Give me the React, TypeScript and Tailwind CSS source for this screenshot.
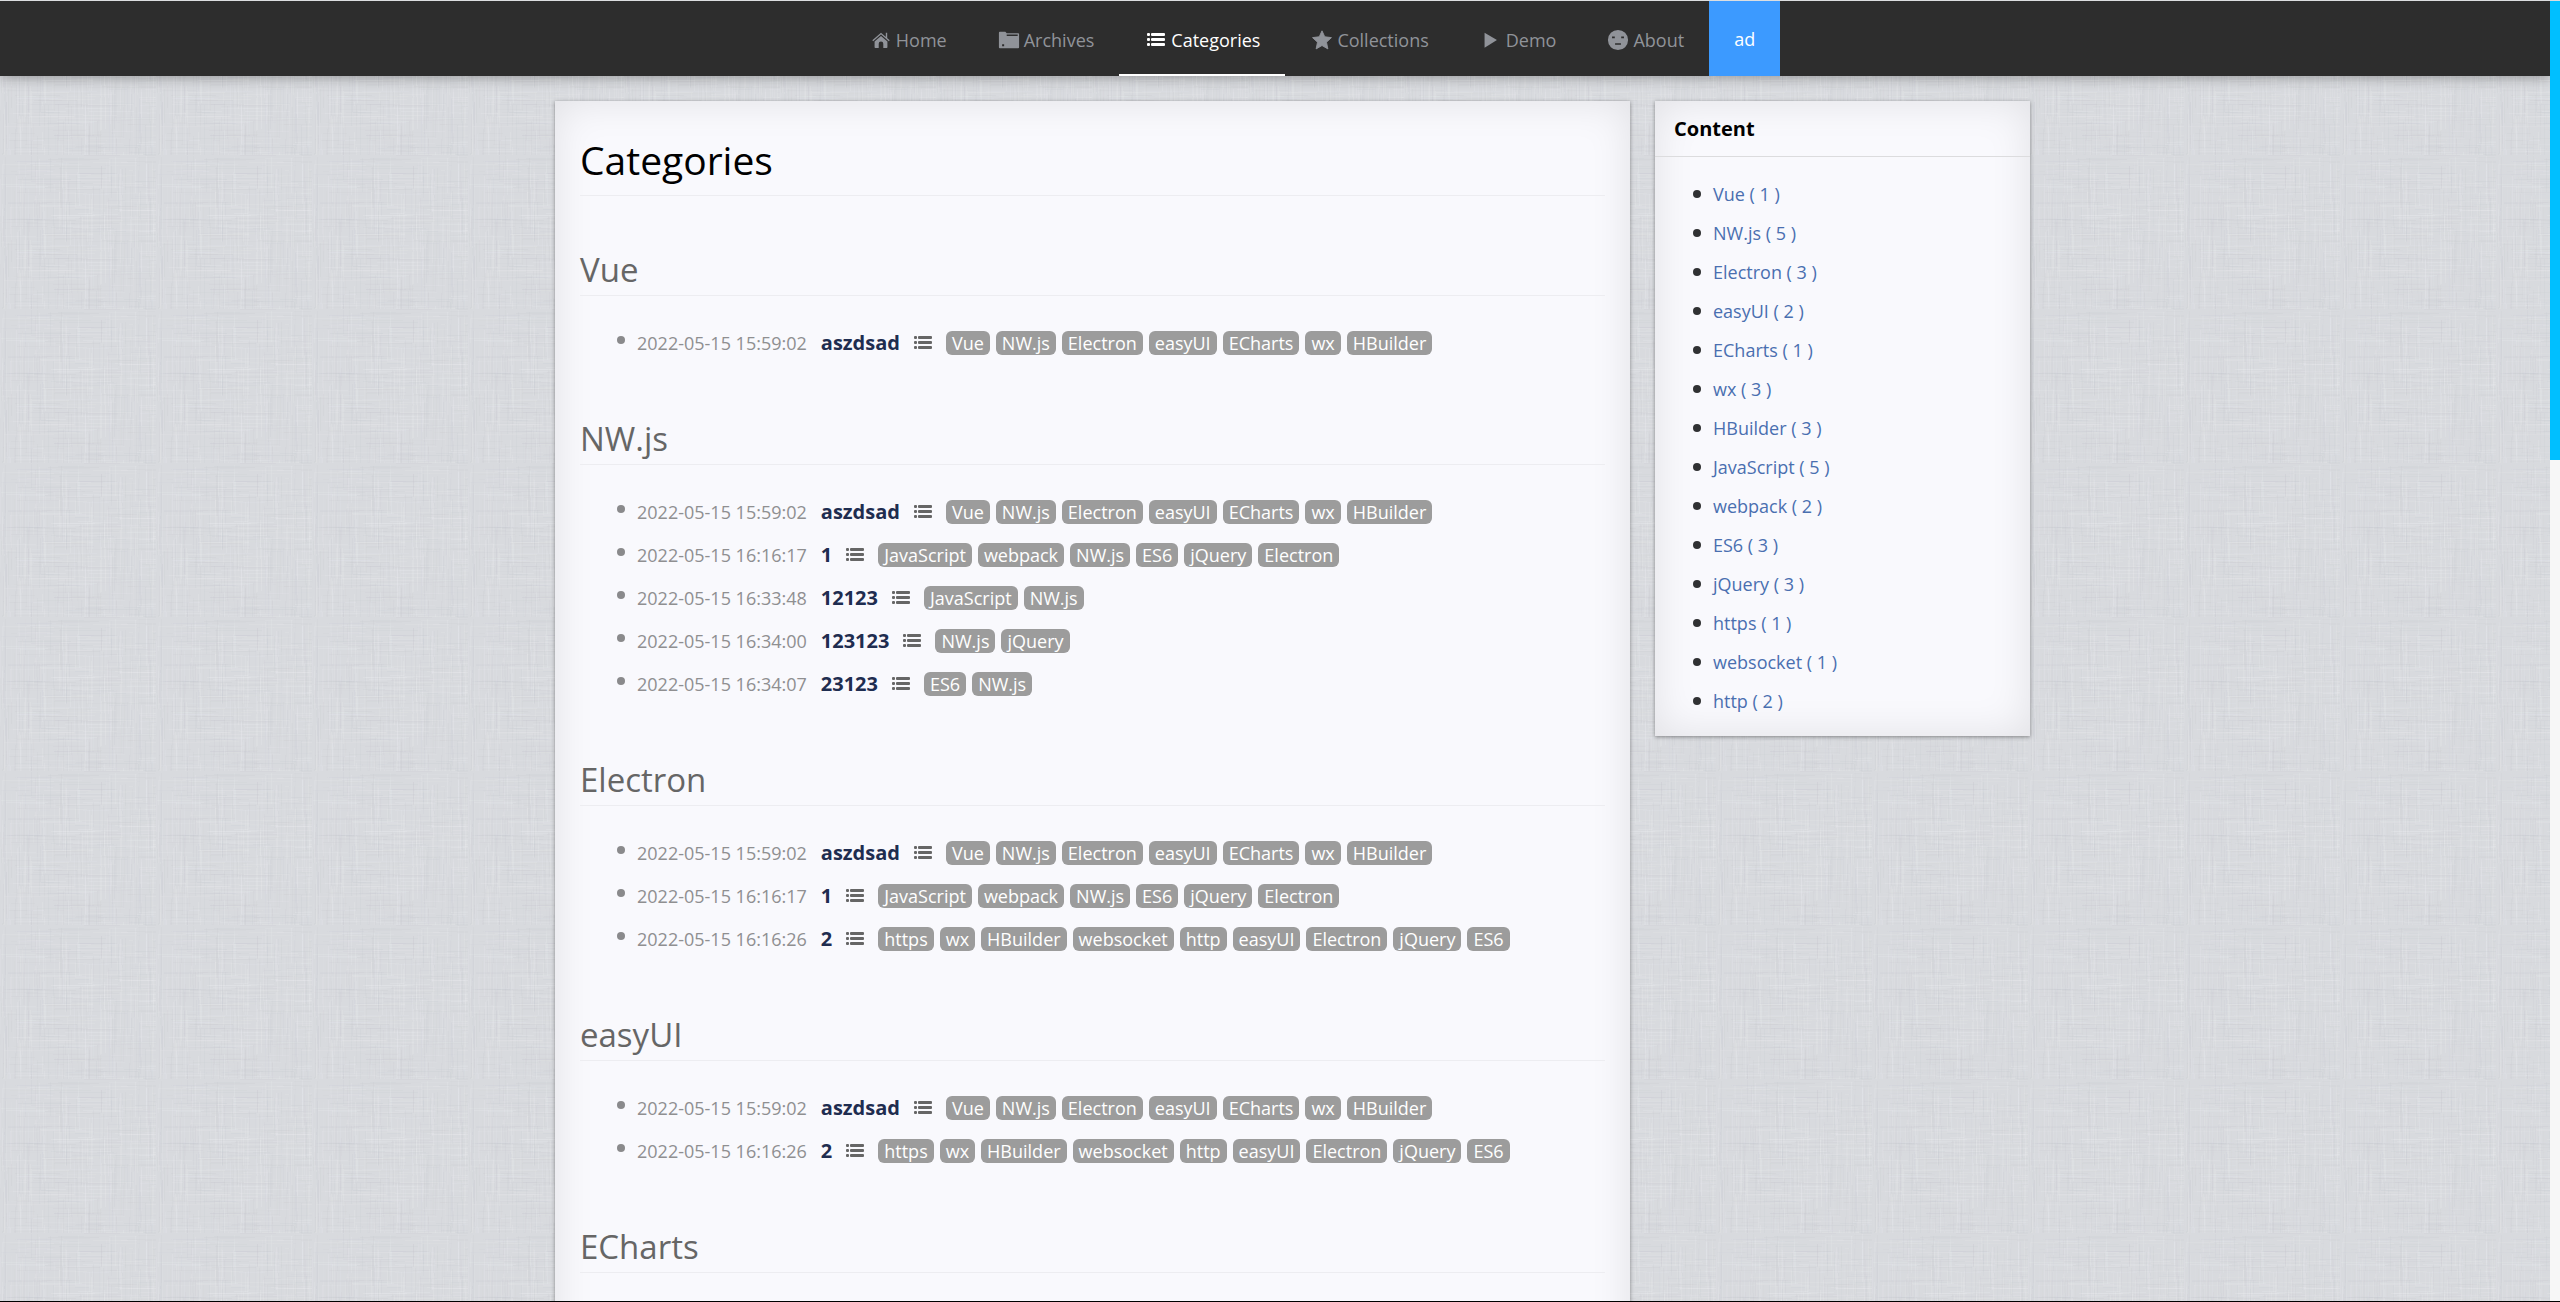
import React from "react";

type IconProps = { className?: string };

const HomeIcon = ({ className }: IconProps) => (
  <svg viewBox="0 0 24 24" className={className} fill="currentColor" aria-hidden="true">
    <path d="M5 13.600 12 7.600l7 6V20a.8.8 0 0 1-.8.8h-3.700v-4.600a2.500 2.500 0 0 0-5 0v4.600H5.800A.8.8 0 0 1 5 20z" />
    <path d="M3 12.800 12 5l9 7.800M18 4.200v5.600" fill="none" stroke="currentColor" strokeWidth="1.500" />
  </svg>
);

const FolderIcon = ({ className }: IconProps) => (
  <svg viewBox="0 0 24 24" className={className} fill="currentColor" aria-hidden="true">
    <path
      fillRule="evenodd"
      d="M1 4a1 1 0 0 1 1-1h6l1.500 1.500H22a1 1 0 0 1 1 1V20a1 1 0 0 1-1 1H2a1 1 0 0 1-1-1zM9.500 6v1.500H21.500V6zM4.500 16.500v2.200h2.200v-2.200z"
    />
  </svg>
);

const ListIcon = ({ className }: IconProps) => (
  <svg viewBox="0 0 18 13" className={className} fill="currentColor" aria-hidden="true">
    {[0, 5, 10].map((y) => (
      <React.Fragment key={y}>
        <rect x="0" y={y} width="3" height="3" rx="1" />
        <rect x="4" y={y} width="14" height="3" rx="1" />
      </React.Fragment>
    ))}
  </svg>
);

const StarIcon = ({ className }: IconProps) => (
  <svg viewBox="0 0 24 24" className={className} fill="currentColor" stroke="currentColor" strokeLinejoin="round" aria-hidden="true">
    <path d="m12 2 3 6.500 7.300.9-5.400 5 1.500 7.300L12 18l-6.400 3.700 1.500-7.300-5.400-5L9 8.500z" />
  </svg>
);

const PlayIcon = ({ className }: IconProps) => (
  <svg viewBox="0 0 24 24" className={className} fill="currentColor" aria-hidden="true">
    <path d="M5 4v16.500L18.500 12z" />
  </svg>
);

const FaceIcon = ({ className }: IconProps) => (
  <svg viewBox="0 0 24 24" className={className} fill="currentColor" aria-hidden="true">
    <path
      fillRule="evenodd"
      d="M12 1a11 11 0 1 0 0 22 11 11 0 0 0 0-22zM5.500 8.200h3v2h-3zM15.500 8.200h3v2h-3zM8.800 15.500h6.400v1.800H8.800z"
    />
  </svg>
);

const navItems = [
  { label: "Home", Icon: HomeIcon },
  { label: "Archives", Icon: FolderIcon },
  { label: "Categories", Icon: ListIcon, active: true },
  { label: "Collections", Icon: StarIcon },
  { label: "Demo", Icon: PlayIcon },
  { label: "About", Icon: FaceIcon },
];

type Post = { date: string; title: string; tags: string[] };

const aszdsad: Post = {
  date: "2022-05-15 15:59:02",
  title: "aszdsad",
  tags: ["Vue", "NW.js", "Electron", "easyUI", "ECharts", "wx", "HBuilder"],
};
const one: Post = {
  date: "2022-05-15 16:16:17",
  title: "1",
  tags: ["JavaScript", "webpack", "NW.js", "ES6", "jQuery", "Electron"],
};
const two: Post = {
  date: "2022-05-15 16:16:26",
  title: "2",
  tags: ["https", "wx", "HBuilder", "websocket", "http", "easyUI", "Electron", "jQuery", "ES6"],
};

const sections: { name: string; posts: Post[] }[] = [
  { name: "Vue", posts: [aszdsad] },
  {
    name: "NW.js",
    posts: [
      aszdsad,
      one,
      { date: "2022-05-15 16:33:48", title: "12123", tags: ["JavaScript", "NW.js"] },
      { date: "2022-05-15 16:34:00", title: "123123", tags: ["NW.js", "jQuery"] },
      { date: "2022-05-15 16:34:07", title: "23123", tags: ["ES6", "NW.js"] },
    ],
  },
  { name: "Electron", posts: [aszdsad, one, two] },
  { name: "easyUI", posts: [aszdsad, two] },
  { name: "ECharts", posts: [] },
];

const contents: [string, number][] = [
  ["Vue", 1],
  ["NW.js", 5],
  ["Electron", 3],
  ["easyUI", 2],
  ["ECharts", 1],
  ["wx", 3],
  ["HBuilder", 3],
  ["JavaScript", 5],
  ["webpack", 2],
  ["ES6", 3],
  ["jQuery", 3],
  ["https", 1],
  ["websocket", 1],
  ["http", 2],
];

// Linen weave: short crossing threads on a small repeating tile.
const TILE_W = 156;
const TILE_H = 154;

function makeThreads() {
  let seed = 11;
  const next = () => {
    seed = (seed * 16807) % 2147483647;
    return seed / 2147483647;
  };
  return Array.from({ length: 700 }, (_, i) => {
    const vertical = i % 2 === 0;
    const length = 14 + Math.floor(next() * 40);
    const w = vertical ? 1 : length;
    const h = vertical ? length : 1;
    return {
      x: Math.floor(next() * TILE_W),
      y: Math.floor(next() * TILE_H),
      w,
      h,
      light: next() > 0.5,
      opacity: 0.04 + next() * 0.12,
    };
  });
}

const threads = makeThreads();

const Linen = () => (
  <svg className="absolute inset-0 -z-10 size-full" aria-hidden="true">
    <defs>
      <pattern id="linen" width={TILE_W} height={TILE_H} patternUnits="userSpaceOnUse">
        <rect width={TILE_W} height={TILE_H} fill="#d8dade" />
        {threads.map((t, i) => (
          <rect key={i} x={t.x} y={t.y} width={t.w} height={t.h} fill={t.light ? "#f2f3f6" : "#bfc1c8"} opacity={t.opacity} />
        ))}
      </pattern>
    </defs>
    <rect width="100%" height="100%" fill="url(#linen)" />
  </svg>
);

const card =
  "bg-[#f9f9fd] shadow-[0_1px_4px_rgba(0,0,0,0.4),inset_0_0_40px_rgba(0,0,0,0.1)]";

const PostRow = ({ post }: { post: Post }) => (
  <li className="flex h-[43px] items-center">
    <span className="mr-3 mb-1.5 size-2 rounded-full bg-[#8a8a8c]" />
    <time className="text-[#8f8f91]">{post.date}</time>
    <a href="#" className="ml-3.5 text-xl font-bold text-[#1f2d50]">
      {post.title}
    </a>
    <ListIcon className="mx-3.5 h-[13px] w-[18px] text-[#666]" />
    <span className="flex gap-1.5">
      {post.tags.map((tag) => (
        <a key={tag} href="#" className="rounded-md bg-[#9c9c9c] px-1.5 leading-6 text-white">
          {tag}
        </a>
      ))}
    </span>
  </li>
);

export default function App() {
  return (
    <div className="relative isolate flex h-screen overflow-hidden border-t border-b border-t-[#dcdee0] border-b-black font-['Open_Sans','Noto_Sans',sans-serif] text-lg">
      <div className="flex min-w-0 flex-1 flex-col">
        <Linen />
        <header className="flex h-[75px] shrink-0 justify-center bg-[#2d2d2d] pl-[74px] shadow-[0_2px_12px_rgba(0,0,0,0.3)]">
          <nav className="flex">
            {navItems.map(({ label, Icon, active }) => (
              <a
                key={label}
                href="#"
                className={
                  active
                    ? "flex items-center gap-[3px] border-b-2 border-white px-[25px] pt-1 text-white"
                    : "flex items-center gap-[3px] border-b-2 border-transparent px-[25px] pt-1 text-[#909399]"
                }
              >
                <span className="flex w-6 justify-center">
                  <Icon className={active ? "h-[13px] w-[18px]" : "size-[22px]"} />
                </span>
                {label}
              </a>
            ))}
          </nav>
          <button className="bg-[#3c9aff] px-[25px] text-white">ad</button>
        </header>

        <div className="flex min-h-0 items-start gap-[25px] pt-[25px] pr-[520px] pl-[555px]">
          <main className={`min-w-0 flex-1 px-[25px] pb-16 ${card}`}>
            <h1 className="flex h-[95px] items-end border-b border-[#ededf1] pb-1 text-[39px] text-black">
              Categories
            </h1>
            {sections.map((section) => (
              <section key={section.name}>
                <h2 className="flex h-[100px] items-end border-b border-[#ededf1] text-[33px] text-[#666]">
                  {section.name}
                </h2>
                <ul className="pt-[25px] pb-px pl-[37px]">
                  {section.posts.map((post, i) => (
                    <PostRow key={i} post={post} />
                  ))}
                </ul>
              </section>
            ))}
          </main>

          <aside className={`w-[375px] shrink-0 pb-4 ${card}`}>
            <h2 className="flex h-14 items-center border-b border-[#dcdcde] px-[19px] text-xl font-bold text-black">
              Content
            </h2>
            <ul className="pt-[17px] pl-[38px]">
              {contents.map(([name, count]) => (
                <li key={name} className="flex h-[39px] items-center gap-3">
                  <span className="size-2 rounded-full bg-[#303133]" />
                  <a href="#" className="text-[#4a6fb0]">
                    {name} ( {count} )
                  </a>
                </li>
              ))}
            </ul>
          </aside>
        </div>
      </div>
      <div className="w-2.5 shrink-0 bg-[#f7f7f7]">
        <div className="h-[459px] bg-[#00bfff]" />
      </div>
    </div>
  );
}
